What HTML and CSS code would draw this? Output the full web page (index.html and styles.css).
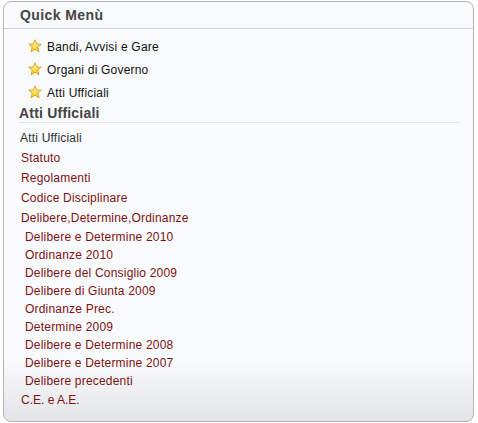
FILE: index.html
```html
<!DOCTYPE html>
<html lang="it">
<head>
<meta charset="utf-8">
<title>Quick Menù</title>
<link rel="stylesheet" href="styles.css">
</head>
<body>
<div class="panel">
  <div class="panel-head">Quick Menù</div>
  <div class="panel-body">
    <ul class="quick">
      <li><svg class="star" viewBox="0 0 14 14" width="14" height="14"><defs><linearGradient id="g" x1="0" y1="0" x2="0" y2="1"><stop offset="0" stop-color="#fffbb0"/><stop offset="1" stop-color="#f2c512"/></linearGradient></defs><polygon points="7,0.8 8.8,5 13.3,5.2 9.8,8.1 11,12.8 7,10.2 3,12.8 4.2,8.1 0.7,5.2 5.2,5" fill="url(#g)" stroke="#c99a12" stroke-width="0.8" stroke-linejoin="round"/></svg><span>Bandi, Avvisi e Gare</span></li>
      <li><svg class="star" viewBox="0 0 14 14" width="14" height="14"><polygon points="7,0.8 8.8,5 13.3,5.2 9.8,8.1 11,12.8 7,10.2 3,12.8 4.2,8.1 0.7,5.2 5.2,5" fill="url(#g)" stroke="#c99a12" stroke-width="0.8" stroke-linejoin="round"/></svg><span>Organi di Governo</span></li>
      <li><svg class="star" viewBox="0 0 14 14" width="14" height="14"><polygon points="7,0.8 8.8,5 13.3,5.2 9.8,8.1 11,12.8 7,10.2 3,12.8 4.2,8.1 0.7,5.2 5.2,5" fill="url(#g)" stroke="#c99a12" stroke-width="0.8" stroke-linejoin="round"/></svg><span>Atti Ufficiali</span></li>
    </ul>
    <h2 class="section-title">Atti Ufficiali</h2>
    <div class="section-label">Atti Ufficiali</div>
    <ul class="links">
      <li class="main">Statuto</li>
      <li class="main">Regolamenti</li>
      <li class="main">Codice Disciplinare</li>
      <li class="main">Delibere,Determine,Ordinanze</li>
      <li class="sub">Delibere e Determine 2010</li>
      <li class="sub">Ordinanze 2010</li>
      <li class="sub">Delibere del Consiglio 2009</li>
      <li class="sub">Delibere di Giunta 2009</li>
      <li class="sub">Ordinanze Prec.</li>
      <li class="sub">Determine 2009</li>
      <li class="sub">Delibere e Determine 2008</li>
      <li class="sub">Delibere e Determine 2007</li>
      <li class="sub">Delibere precedenti</li>
      <li class="main last">C.E. e A.E.</li>
    </ul>
  </div>
</div>
</body>
</html>
```

FILE: styles.css
```css
html, body {
  margin: 0;
  padding: 0;
  background: #ffffff;
}
body {
  padding: 1px 4px 0 3px;
  font-family: "Liberation Sans", Arial, sans-serif;
}
.panel {
  box-sizing: border-box;
  height: 421px;
  border: 1px solid #b4b4b4;
  border-radius: 8px;
  background: linear-gradient(to bottom, #f9fafc 0, #f9fafc 358px, #e3e4e7 100%);
  overflow: hidden;
}
.panel-head {
  height: 26px;
  border-bottom: 1px solid #cfd0d2;
  padding-left: 16px;
  font-size: 14px;
  font-weight: bold;
  letter-spacing: 0.4px;
  color: #454545;
  line-height: 27px;
}
.panel-body {
  padding: 6px 0 0 15px;
}
.quick {
  list-style: none;
  margin: 0;
  padding: 0 0 1px 9px;
}
.quick li {
  height: 23px;
  display: flex;
  align-items: center;
  font-size: 12px;
  letter-spacing: 0.2px;
  color: #111;
}
.star {
  display: block;
  margin-right: 5px;
  margin-top: -1px;
}
.section-title {
  margin: 0 13px 0 0;
  font-size: 14px;
  font-weight: bold;
  letter-spacing: 0.2px;
  color: #444;
  line-height: 17px;
  border-bottom: 1px solid #e4e5e7;
}
.section-label {
  margin-top: 5px;
  padding-left: 1px;
  font-size: 12px;
  letter-spacing: 0.2px;
  line-height: 20px;
  color: #333;
}
.links {
  list-style: none;
  margin: 0;
  padding: 0;
  font-size: 12px;
  letter-spacing: 0.2px;
  color: #7d1212;
}
.links .main {
  line-height: 20px;
  padding-left: 2px;
}
.links .sub {
  line-height: 18px;
  padding-left: 6px;
}
.links .last {
  letter-spacing: 0;
}
```
